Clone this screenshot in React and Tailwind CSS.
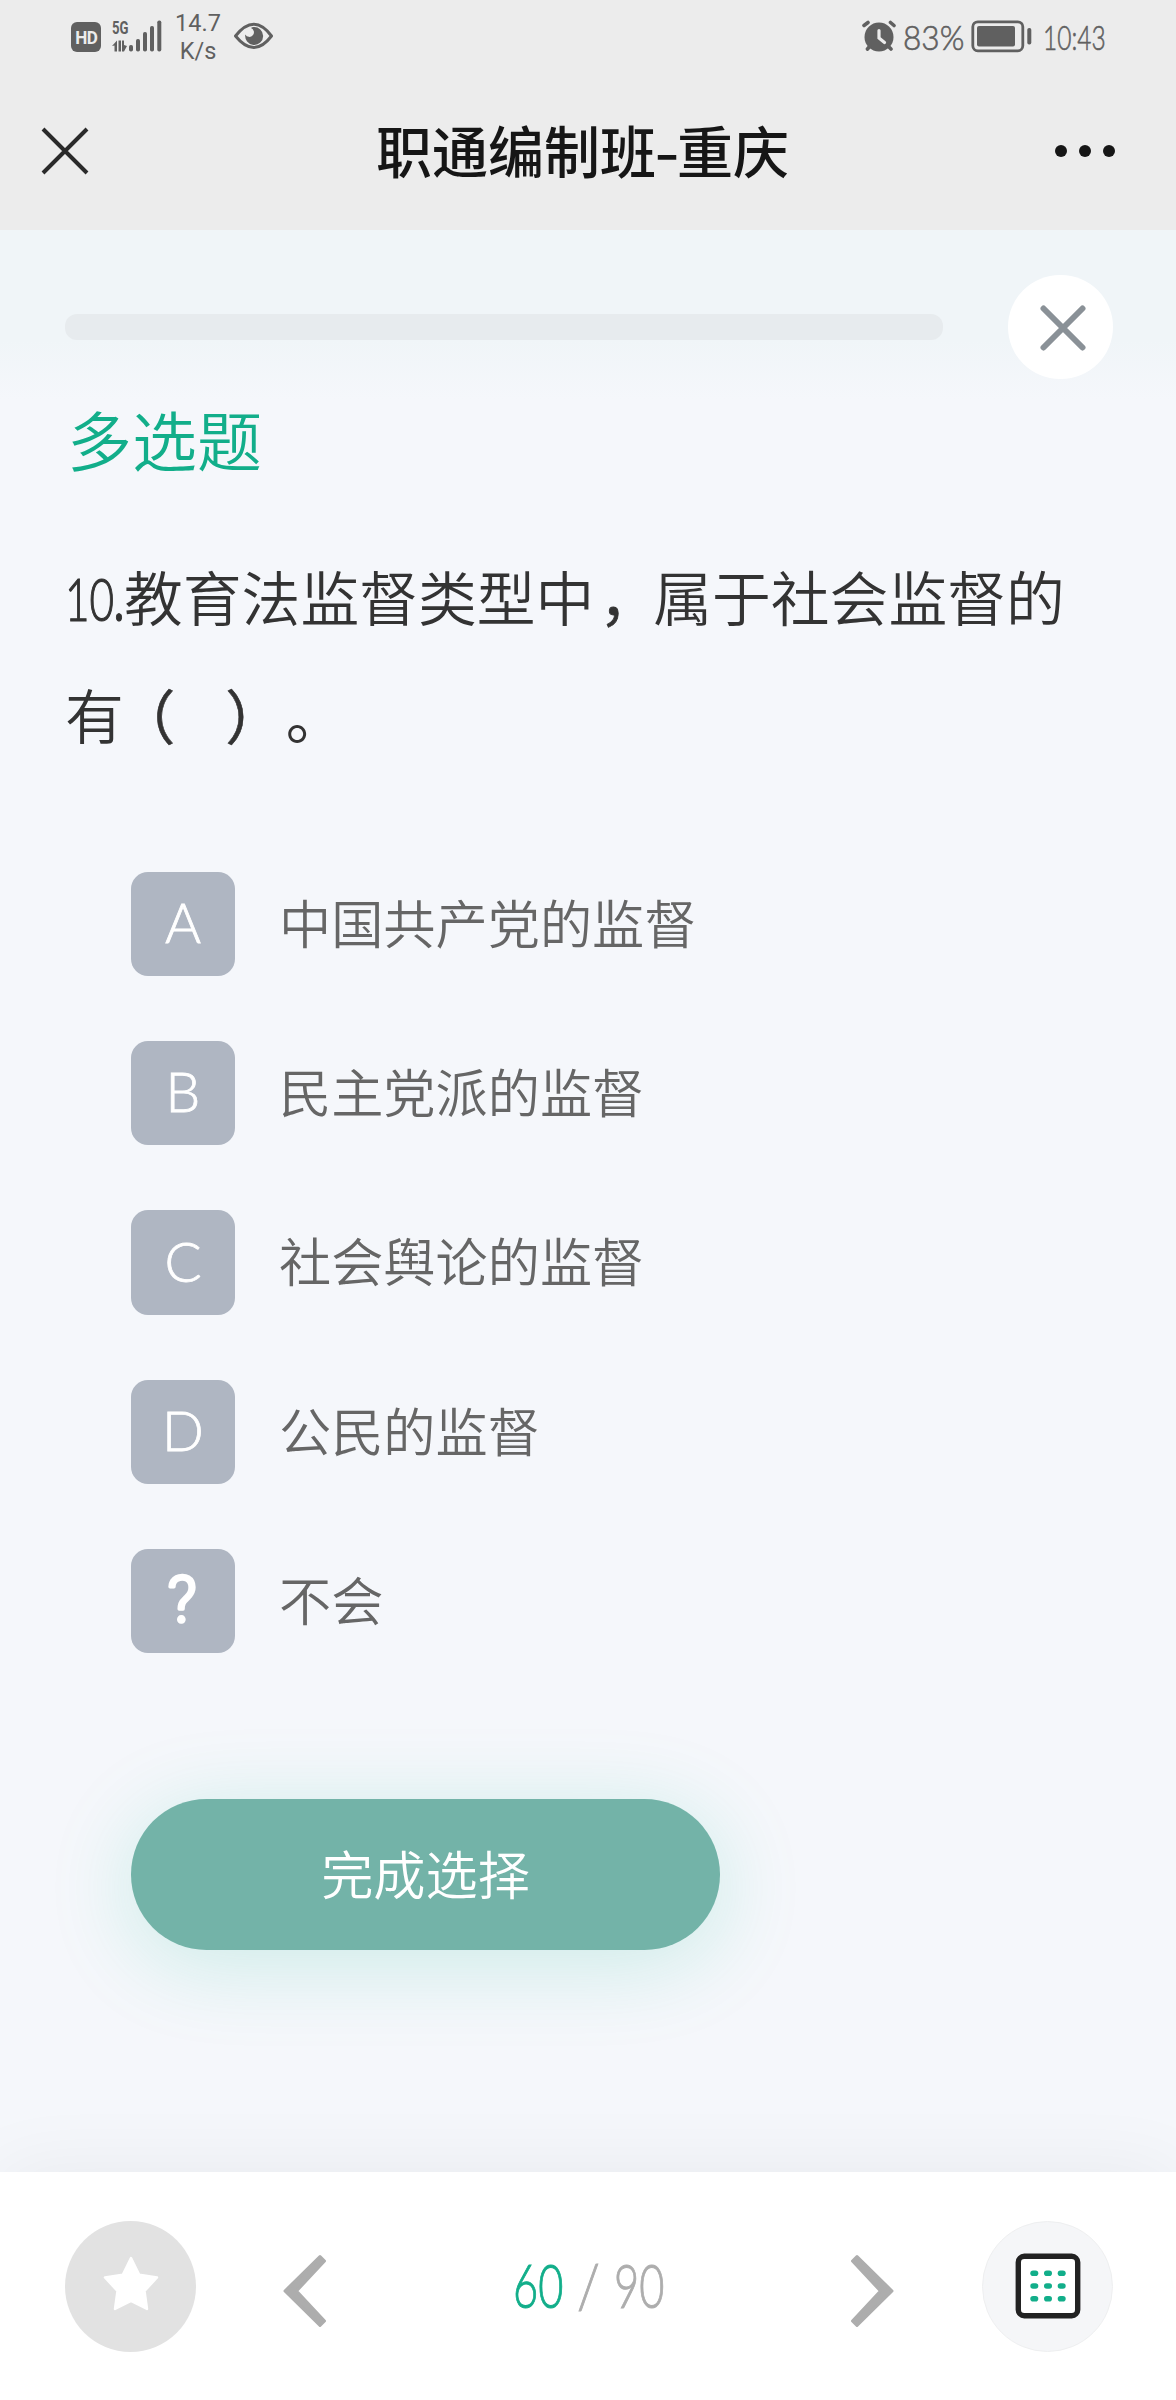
const OPTIONS = [
  { key: "A", label: "中国共产党的监督" },
  { key: "B", label: "民主党派的监督" },
  { key: "C", label: "社会舆论的监督" },
  { key: "D", label: "公民的监督" },
  { key: "?", label: "不会" },
];

function HdIcon() {
  return (
    <div className="mt-[22px] flex h-[30px] w-[30px] items-center justify-center rounded-[6px] bg-[#606060] font-['Roboto',sans-serif] text-[19px] leading-none font-bold text-[#ececec]">
      <span className="inline-block scale-x-90 tracking-[-0.5px]">HD</span>
    </div>
  );
}

function SignalIcon() {
  return (
    <svg className="mt-[18px] ml-[10px] h-[36px] w-[52px]" viewBox="111 18 52 36" fill="#606060">
      <text x="112" y="34" fontSize="18" fontWeight="700" fontFamily="Roboto, sans-serif" textLength="16.5" lengthAdjust="spacingAndGlyphs">5G</text>
      <path d="M112 46 117 40.5V51.5H114.500V45.500ZM118.500 40.500H121V51.500H118.500ZM122 40.500H124V45L127 46 124 51.500H122Z" />
      <rect x="129" y="45" width="4" height="6.500" rx="1.800" />
      <rect x="136" y="39" width="4" height="12.500" rx="1.800" />
      <rect x="143" y="32" width="4" height="19.500" rx="1.800" />
      <rect x="150" y="26" width="4" height="25.500" rx="1.800" />
      <rect x="157.300" y="20.500" width="4" height="31" rx="1.800" />
    </svg>
  );
}

function EyeIcon() {
  return (
    <svg className="mt-[20px] ml-[10px] h-[32px] w-[42px]" viewBox="231 20 42 32">
      <path d="M233.500 36Q252 12.500 269.500 36Q252 59 233.500 36Z" fill="none" stroke="#606060" strokeWidth="3" strokeLinejoin="round" />
      <path d="M251.500 27A9 9 0 1 1 243.300 34.500A4.600 4.600 0 1 0 249 28Q250 27 251.500 27Z" fill="#606060" />
    </svg>
  );
}

function AlarmIcon() {
  return (
    <svg className="mt-[20px] h-[34px] w-[36px]" viewBox="861 20 36 34" stroke="#606060" strokeLinecap="round" fill="none">
      <circle cx="879" cy="37" r="14.500" fill="#606060" stroke="none" />
      <path d="M864 25.500 868 22.500M890.500 22.500 894 25.500M870 46 867.500 49M888 46 891 49" strokeWidth="3.600" />
      <path d="M879 30.500V38L884.500 42.500" stroke="#ececec" strokeWidth="3.200" />
    </svg>
  );
}

function BatteryIcon() {
  return (
    <svg className="mt-[19px] ml-[6px] h-[34px] w-[62px]" viewBox="970 19 62 34" fill="#606060">
      <rect x="972.800" y="21.800" width="50" height="29" rx="5" fill="none" stroke="#606060" strokeWidth="2.800" />
      <rect x="977" y="26" width="38" height="20.500" rx="2" />
      <rect x="1027.300" y="28" width="4" height="16.500" rx="1.800" />
    </svg>
  );
}

function StatusBar() {
  return (
    <div className="flex h-[74px] justify-between pr-[72px] pl-[71px] text-[#606060]">
      <div className="flex">
        <HdIcon />
        <SignalIcon />
        <div className="mt-[9px] ml-[10px] w-[50px] text-center font-['Roboto',sans-serif] text-[23.500px] leading-[28px]">
          <div>14.7</div>
          <div>K/s</div>
        </div>
        <EyeIcon />
      </div>
      <div className="flex font-['Lato',sans-serif] text-[34px] leading-[73px] font-light [-webkit-text-stroke:0.6px_#606060]">
        <AlarmIcon />
        <div className="ml-[6px] w-[61px] whitespace-nowrap">
          <span className="inline-block origin-left scale-x-[0.93]">83%</span>
        </div>
        <BatteryIcon />
        <div className="ml-[11px] w-[61px] whitespace-nowrap">
          <span className="inline-block origin-left scale-x-[0.72]">10:43</span>
        </div>
      </div>
    </div>
  );
}

function TitleBar() {
  return (
    <div className="flex h-[156px] items-center justify-between pr-[60px] pl-[40px]">
      <svg className="mb-[3px] h-[50px] w-[50px]" viewBox="0 0 50 50" stroke="#2a2a2a" strokeWidth="4" fill="none">
        <path d="M3 3 47 47M47 3 3 47" />
      </svg>
      <h1 className="mb-[6px] ml-[21px] flex font-['Noto_Sans_CJK_SC',sans-serif] text-[56px] leading-none font-medium text-[#161616]">
        <span>职通编制班</span>
        <span className="flex w-[21px] justify-center"><span className="inline-block scale-x-[1.25]">-</span></span>
        <span>重庆</span>
      </h1>
      <svg className="mb-[3px] h-[14px] w-[62px]" viewBox="0 0 62 14" fill="#161616">
        <circle cx="7" cy="7" r="6" />
        <circle cx="31" cy="7" r="6" />
        <circle cx="55" cy="7" r="6" />
      </svg>
    </div>
  );
}

function Option({ option }) {
  return (
    <div className="flex h-[104.500px] items-center">
      <div className="flex h-full w-[104px] items-center justify-center rounded-[17px] bg-[#afb6c2] font-['Lato',sans-serif] text-[55px] leading-none font-light text-white [-webkit-text-stroke:0.8px_#fff]">
        {option.key === "?" ? (
          <svg className="mr-[3px] h-[80px] w-[40px]" viewBox="0 0 40 80" fill="#fff" stroke="#fff" strokeWidth="3.500" strokeLinejoin="round">
            <text x="20" y="61" textAnchor="middle" fontSize="64" fontWeight="300" fontFamily="Roboto, sans-serif" style={{ WebkitTextStroke: "3.6px #fff" }}>?</text>
          </svg>
        ) : (
          <span className="-mt-[3px]">{option.key}</span>
        )}
      </div>
      <div className="mb-[6px] ml-[44px] font-['Noto_Sans_CJK_SC',sans-serif] text-[52.200px] leading-none font-[350] text-[#666]">{option.label}</div>
    </div>
  );
}

function Footer() {
  return (
    <footer className="flex h-[228px] items-center bg-white pr-[63px] pl-[65px] shadow-[0_0_80px_rgba(0,0,0,0.06)]">
      <button className="flex h-[131px] w-[131px] items-center justify-center rounded-full bg-[#e2e2e2]">
        <svg className="mb-[6px] h-[56px] w-[56px]" viewBox="0 0 56 56" fill="#fff" stroke="#fff" strokeWidth="2.500" strokeLinejoin="round">
          <path d="M28 3 36.200 19.700 54 22.500 41.500 36 44 54 28 46 12 54 14.500 36 2 22.500 19.800 19.700Z" />
        </svg>
      </button>
      <svg className="mt-[9px] ml-[87px] h-[74px] w-[44px]" viewBox="0 0 44 74" fill="#adadad" stroke="#adadad" strokeWidth="3" strokeLinejoin="round">
        <path d="M37 2.500 41.500 7 13.500 37 41.500 67 37 71.500 2 37Z" />
      </svg>
      <div className="mb-[4px] ml-[186px] flex w-[154px] font-['Lato',sans-serif] text-[62px] leading-none font-light text-[#adadad] [-webkit-text-stroke:1px]">
        <div className="w-[64px] text-[#12ae8a]"><span className="inline-block origin-left scale-x-[0.7]">60</span></div>
        <div className="w-[37px]"><span className="inline-block origin-left scale-x-[0.85]">/</span></div>
        <div className="w-[50px]"><span className="inline-block origin-left scale-x-[0.7]">90</span></div>
      </div>
      <svg className="mt-[9px] ml-[183px] h-[74px] w-[44px]" viewBox="0 0 44 74" fill="#adadad" stroke="#adadad" strokeWidth="3" strokeLinejoin="round">
        <path d="M7 2.500 2.500 7 30.500 37 2.500 67 7 71.500 42 37Z" />
      </svg>
      <button className="ml-auto flex h-[131px] w-[131px] items-center justify-center rounded-full border border-[#eeeff0] bg-[#f5f6f8]">
        <svg className="h-[66px] w-[66px]" viewBox="0 0 66 66">
          <rect x="3.300" y="3.300" width="59.400" height="59.400" rx="6" fill="#fff" stroke="#222" strokeWidth="5.400" />
          {[20.3, 33, 45.7].map((y) =>
            [19.3, 33, 46.7].map((x) => (
              <rect key={`${x}-${y}`} x={x - 4} y={y - 2.8} width="8" height="5.600" rx="2.800" fill="#12ae8a" />
            ))
          )}
        </svg>
      </button>
    </footer>
  );
}

export default function App() {
  return (
    <div className="flex h-[2400px] w-[1176px] flex-col overflow-hidden bg-[#f5f7fb] font-['Noto_Sans_CJK_SC',sans-serif]">
      <header className="h-[230px] shrink-0 bg-[#ececec]">
        <StatusBar />
        <TitleBar />
      </header>
      <main className="flex-1 bg-[linear-gradient(to_bottom,#f0f5f8_0px,#f0f5f8_110px,#f5f7fb_170px,#f5f7fb_100%)]">
        <div className="flex items-center justify-between pt-[44.500px] pr-[63px] pl-[65px]">
          <div className="h-[26px] w-[878px] rounded-[12px] bg-[#e7ebee]" />
          <button className="flex h-[104.500px] w-[105px] items-center justify-center rounded-full bg-white">
            <svg className="mt-[3px] ml-[5px] h-[46px] w-[46px]" viewBox="0 0 46 46" stroke="#8a9197" strokeWidth="6" strokeLinecap="round" fill="none">
              <path d="M3.500 3.500 42.500 42.500M42.500 3.500 3.500 42.500" />
            </svg>
          </button>
        </div>
        <h2 className="mt-[27px] ml-[67px] text-[65px] leading-[64px] font-[350] text-[#12ae8a]">多选题</h2>
        <div className="mt-[67px] ml-[65px] text-[58.800px] leading-[117.600px] font-[350] text-[#333]">
          <div className="flex">
            <span className="h-[117.600px] w-[59px] pt-[3px] font-['Lato',sans-serif] font-light whitespace-nowrap [-webkit-text-stroke:1.2px]">
              <span className="inline-block origin-left scale-x-[0.72]">10<span className="font-normal">.</span></span>
            </span>
            <span className="whitespace-nowrap">教育法监督类型中</span>
            <span className="w-[58.800px] pl-[5px] [font-feature-settings:'halt'] [-webkit-text-stroke:0.8px]">，</span>
            <span className="whitespace-nowrap">属于社会监督的</span>
          </div>
          <div className="flex [font-feature-settings:'halt']">
            <span>有</span>
            <span className="ml-[22px] font-normal [-webkit-text-stroke:0.6px]">（</span>
            <span className="ml-[50px] font-normal [-webkit-text-stroke:0.6px]">）</span>
            <span className="ml-[31px] font-normal">。</span>
          </div>
        </div>
        <div className="mt-[99.500px] ml-[131px] flex flex-col gap-[64.800px]">
          {OPTIONS.map((o) => (
            <Option key={o.key} option={o} />
          ))}
        </div>
        <button className="mt-[146px] ml-[131px] flex h-[151px] w-[589px] items-center justify-center rounded-full bg-[#73b3a8] pb-[6px] text-[52.200px] leading-none font-[350] text-white shadow-[0_13px_86px_rgba(18,190,145,0.18)]">
          完成选择
        </button>
      </main>
      <Footer />
    </div>
  );
}
